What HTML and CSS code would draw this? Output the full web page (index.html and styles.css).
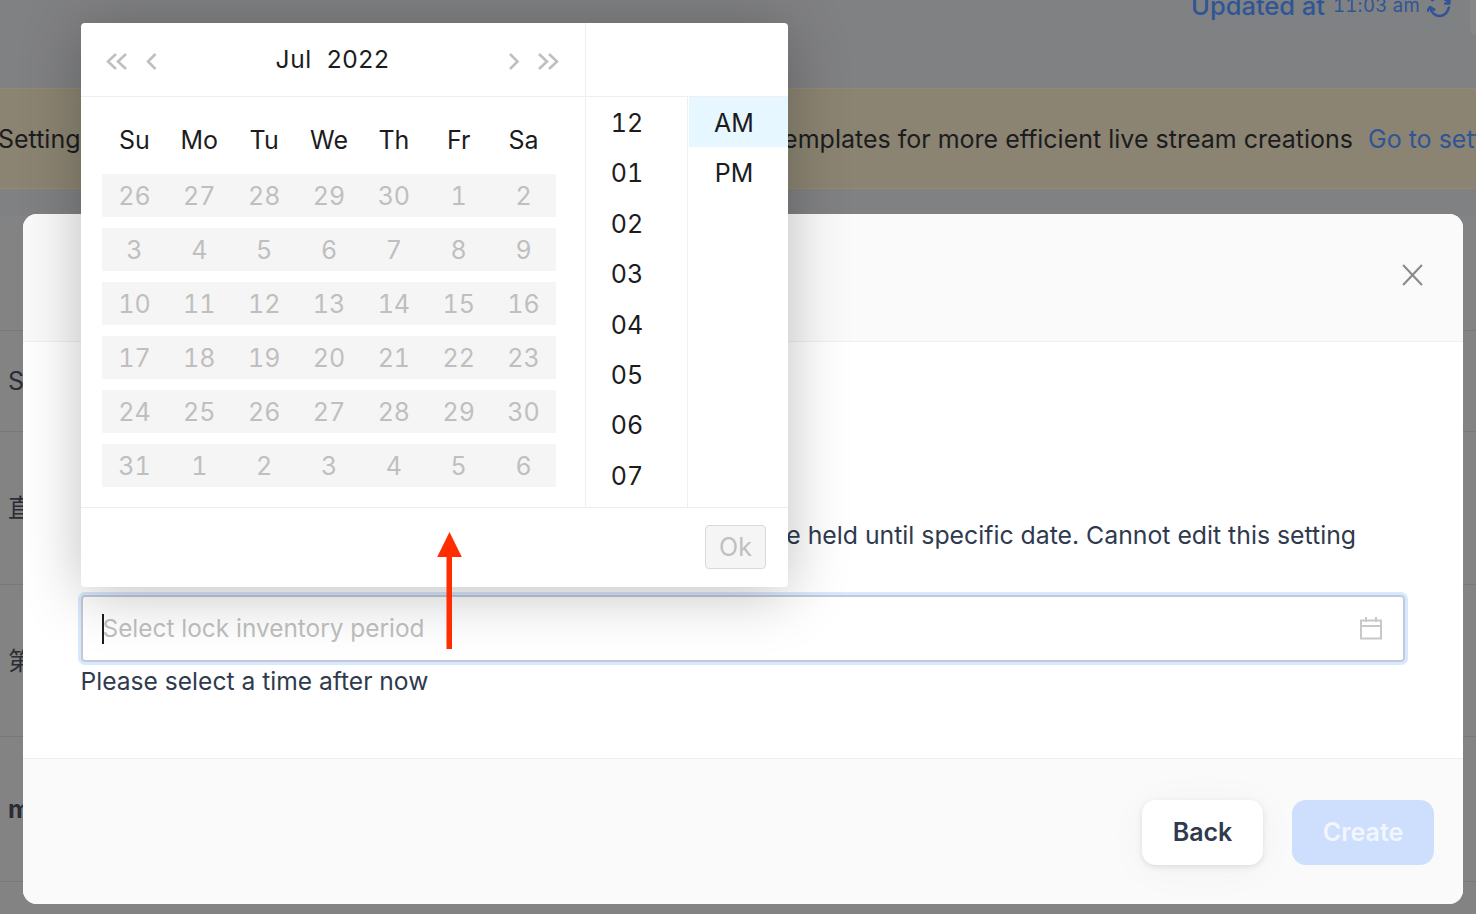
FILE: index.html
```html
<!DOCTYPE html>
<html lang="en">
<head>
<meta charset="utf-8">
<title>Lock inventory period</title>
<link rel="stylesheet" href="styles.css">
</head>
<body>
<div class="page">
  <div class="topbar">
    <div class="updated">
      <span class="updated-label">Updated at</span>
      <span class="updated-time">11:03 am</span>
      <svg class="refresh" viewBox="0 0 24 24" fill="none" stroke="#2f5597" stroke-width="2.400" stroke-linecap="round" stroke-linejoin="round"><path d="M3 14c1 5 5 8 9 8s8-3 9-8"/><path d="M0.500 17l2.500-3.500L7 16"/><path d="M21.500 6v4h-4"/><path d="M5 7c3-3 11-3 15 1"/></svg>
    </div>
    <div class="corner"></div>
  </div>
  <div class="banner">
    <span class="banner-left">Settings</span>
    <span class="banner-text">Use templates for more efficient live stream creations</span>
    <span class="banner-link">Go to settings</span>
  </div>
  <div class="table">
    <div class="row row-head"></div>
    <div class="row row-a">Stream</div>
    <div class="row row-b">直播</div>
    <div class="row row-c">第一</div>
    <div class="row row-d"><b>m</b></div>
    <div class="row row-e"></div>
  </div>
</div>

<div class="modal">
  <div class="modal-head">
    <svg class="close" viewBox="0 0 22 22" fill="none" stroke="#8a8a8a" stroke-width="2"><path d="M2 2l18 19M20 2L2 21"/></svg>
  </div>
  <div class="modal-body">
    <p class="note">Lock inventory: items will be held until specific date. Cannot edit this setting</p>
    <div class="field">
      <span class="caret"></span>
      <span class="placeholder">Select lock inventory period</span>
      <svg class="cal-icon" viewBox="0 0 24 24" fill="none" stroke="#c8c8c8" stroke-width="2"><path d="M2 4.500h20v18H2zM2 10h20M7 1v5M17 1v5"/></svg>
    </div>
    <p class="hint">Please select a time after now</p>
  </div>
  <div class="modal-foot">
    <button class="btn btn-back">Back</button>
    <button class="btn btn-create">Create</button>
  </div>
</div>

<div class="picker">
  <div class="picker-main">
    <div class="cal">
      <div class="cal-head">
        <div class="nav">
          <svg class="nav-dbl" viewBox="0 0 24 19" fill="none" stroke="#bfbfbf" stroke-width="2.600"><path d="M11 2L3 9.500l8 7.500M21 2l-8 7.500 8 7.500"/></svg>
          <svg class="nav-sgl" viewBox="0 0 12 19" fill="none" stroke="#bfbfbf" stroke-width="2.600"><path d="M10.500 2L3 9.500l7.500 7.500"/></svg>
        </div>
        <div class="month">Jul&nbsp; 2022</div>
        <div class="nav">
          <svg class="nav-sgl" viewBox="0 0 12 19" fill="none" stroke="#bfbfbf" stroke-width="2.600"><path d="M2 2l7.500 7.500L2 17"/></svg>
          <svg class="nav-dbl" viewBox="0 0 24 19" fill="none" stroke="#bfbfbf" stroke-width="2.600"><path d="M3 2l8 7.500L3 17M13 2l8 7.500-8 7.500"/></svg>
        </div>
      </div>
      <div class="cal-body">
        <div class="week week-head"><span>Su</span><span>Mo</span><span>Tu</span><span>We</span><span>Th</span><span>Fr</span><span>Sa</span></div>
        <div class="week"><span>26</span><span>27</span><span>28</span><span>29</span><span>30</span><span>1</span><span>2</span></div>
        <div class="week"><span>3</span><span>4</span><span>5</span><span>6</span><span>7</span><span>8</span><span>9</span></div>
        <div class="week"><span>10</span><span>11</span><span>12</span><span>13</span><span>14</span><span>15</span><span>16</span></div>
        <div class="week"><span>17</span><span>18</span><span>19</span><span>20</span><span>21</span><span>22</span><span>23</span></div>
        <div class="week"><span>24</span><span>25</span><span>26</span><span>27</span><span>28</span><span>29</span><span>30</span></div>
        <div class="week"><span>31</span><span>1</span><span>2</span><span>3</span><span>4</span><span>5</span><span>6</span></div>
      </div>
    </div>
    <div class="time">
      <div class="time-head"></div>
      <div class="time-cols">
        <ul class="col col-hours">
          <li>12</li><li>01</li><li>02</li><li>03</li><li>04</li><li>05</li><li>06</li><li>07</li>
        </ul>
        <ul class="col col-ampm">
          <li class="selected">AM</li><li>PM</li>
        </ul>
      </div>
    </div>
  </div>
  <div class="picker-foot"><button class="ok">Ok</button></div>
</div>

<svg class="arrow" viewBox="0 0 25 117"><path d="M12.500 0L24.800 25H15V117H9.500V25H0.200z" fill="#ff2d00"/></svg>
</body>
</html>
```
FILE: styles.css
```css
* { box-sizing: border-box; }
html, body { margin: 0; padding: 0; }
body {
  width: 1476px;
  height: 914px;
  overflow: hidden;
  position: relative;
  background: #808183;
  font-family: Inter, "Noto Sans CJK SC", sans-serif;
  font-size: 25px;
  color: #1c1c1e;
}
p, ul { margin: 0; padding: 0; }
li { list-style: none; }
button { font-family: inherit; }

/* Dimmed page behind the dialog */
.page { width: 1476px; height: 914px; overflow: hidden; }
.topbar { height: 88px; position: relative; }
.updated {
  position: absolute;
  left: 1189px;
  top: -8px;
  width: 267px;
  height: 36px;
  padding-left: 2px;
  border-bottom: 1px solid #76808f;
  display: flex;
  align-items: center;
  white-space: nowrap;
  color: #2f5597;
}
.updated-label { font-size: 25.500px; font-weight: 500; line-height: 30px; margin-top: -8px; }
.updated-time {
  font-size: 18.500px;
  margin-left: 8px;
  margin-top: -10px;
  letter-spacing: .3px;
  font-variant-numeric: tabular-nums;
}
.refresh { width: 25px; height: 25px; margin-left: 7px; margin-top: -8px; }
.corner {
  position: absolute;
  left: 1470px;
  top: -10px;
  width: 30px;
  height: 46px;
  border-radius: 8px;
  background: #868789;
}
.banner {
  height: 101px;
  background: #8b8472;
  border-top: 1px solid #96896a;
  border-bottom: 1px solid #96896a;
  display: flex;
  align-items: center;
  white-space: nowrap;
  font-size: 25px;
}
.banner-left { margin-left: -2px; flex: 1; }
.banner-link { width: 108px; margin-left: 15px; overflow: hidden; color: #2f5597; }
.table { margin-top: 27px; background: #838383; color: #2a2d35; }
.row {
  border-bottom: 1px solid #787878;
  padding-left: 8px;
  display: flex;
  align-items: center;
  white-space: nowrap;
}
.row-head { height: 115px; }
.row-a { height: 101px; }
.row-b { height: 153px; padding-bottom: 4px; }
.row-c { height: 152px; padding-bottom: 4px; }
.row-d { height: 145px; }
.row-e { height: 40px; border: 0; }

/* Dialog */
.modal {
  position: absolute;
  left: 23px;
  top: 214px;
  width: 1440px;
  height: 690px;
  background: #fff;
  border-radius: 14px;
  overflow: hidden;
  display: flex;
  flex-direction: column;
}
.modal-head {
  height: 128px;
  flex: none;
  background: #fafafa;
  border-bottom: 1px solid #efefef;
  padding: 49px 39px 0 0;
  display: flex;
  justify-content: flex-end;
}
.close { width: 23px; height: 23px; }
.modal-body { height: 416px; flex: none; padding: 175px 58px 0; color: #2f3a4f; }
.note {
  line-height: 36px;
  white-space: nowrap;
  text-align: right;
  padding-right: 49px;
  font-size: 24.800px;
}
.field {
  margin-top: 42px;
  width: 1324px;
  height: 67px;
  border: 2px solid #c3cad5;
  border-radius: 4px;
  box-shadow: 0 0 0 3px #d7e8ff;
  padding: 0 20px 2px 19.500px;
  display: flex;
  align-items: center;
  position: relative;
  font-size: 24.400px;
}
.caret {
  position: absolute;
  left: 19px;
  top: 17px;
  width: 2px;
  height: 30px;
  background: #1c1c1e;
}
.placeholder { flex: 1; color: #bfbfbf; }
.cal-icon { width: 24px; height: 24px; }
.hint { line-height: 38px; font-size: 24.600px; margin-left: -.5px; }
.modal-foot {
  flex: 1;
  background: #fafafa;
  border-top: 1px solid #efefef;
  padding: 41px 29px 0 0;
  display: flex;
  justify-content: flex-end;
  gap: 29px;
  align-items: flex-start;
}
.btn {
  height: 65px;
  border: 0;
  border-radius: 14px;
  font-size: 25px;
  font-weight: 600;
  padding: 0 0 2px;
}
.btn-back {
  width: 121px;
  background: #fff;
  color: #2f3a4f;
  box-shadow: 0 2px 6px rgba(0,0,0,.1), 0 4px 40px rgba(0,0,0,.04);
}
.btn-create { width: 142px; background: #cddffc; color: #f2f6fe; }

/* Date picker popup */
.picker {
  position: absolute;
  left: 81px;
  top: 23px;
  width: 707px;
  height: 564px;
  background: #fff;
  border-radius: 4px;
  box-shadow: 0 6px 60px rgba(0,0,0,.25);
  display: flex;
  flex-direction: column;
}
.picker-main { height: 485px; flex: none; display: flex; border-bottom: 1px solid #efefef; }
.cal { width: 505px; flex: none; border-right: 1px solid #efefef; }
.cal-head {
  height: 74px;
  border-bottom: 1px solid #efefef;
  padding: 0 25px 0 24px;
  display: flex;
  align-items: center;
  justify-content: space-between;
}
.nav { display: flex; align-items: center; gap: 16px; margin-top: 4px; }
.nav-dbl { width: 24px; height: 19px; }
.nav-sgl { width: 12px; height: 19px; }
.month { letter-spacing: .6px; color: #1c1c1e; font-size: 24.500px; margin-top: -2px; }
.cal-body { padding: 21px 0 0 21px; }
.week {
  width: 454px;
  height: 43px;
  margin-bottom: 11px;
  display: grid;
  grid-template-columns: repeat(7, 1fr);
  align-items: center;
  justify-items: center;
  background: #f5f5f5;
  color: #bfbfbf;
  font-variant-numeric: tabular-nums;
}
.week span { padding-top: 1px; }
.week-head { background: none; color: #1c1c1e; margin-bottom: 13px; }
.week-head span { padding-top: 0; }
.time { flex: 1; min-width: 0; }
.time-head { height: 74px; border-bottom: 1px solid #efefef; }
.time-cols { height: 410px; display: flex; overflow: hidden; }
.col { flex: none; text-align: center; color: #1c1c1e; font-variant-numeric: tabular-nums; }
.col-hours { border-right: 1px solid #efefef; width: 102px; padding-right: 19px; }
.col-ampm { width: 100px; }
.col li { height: 50.400px; line-height: 52px; }
.col-ampm li { margin-left: 1px; padding-right: 9px; }
.col .selected { background: #e6f7ff; }
.picker-foot {
  flex: 1;
  padding: 17px 22px 0 0;
  display: flex;
  justify-content: flex-end;
  align-items: flex-start;
}
.ok {
  width: 61px;
  height: 44px;
  background: #f5f5f5;
  border: 1px solid #d9d9d9;
  border-radius: 4px;
  color: #bfbfbf;
  font-size: 25px;
  padding: 0;
}

/* Annotation arrow drawn on the screenshot */
.arrow { position: absolute; left: 437px; top: 532px; width: 25px; height: 117px; }
```
